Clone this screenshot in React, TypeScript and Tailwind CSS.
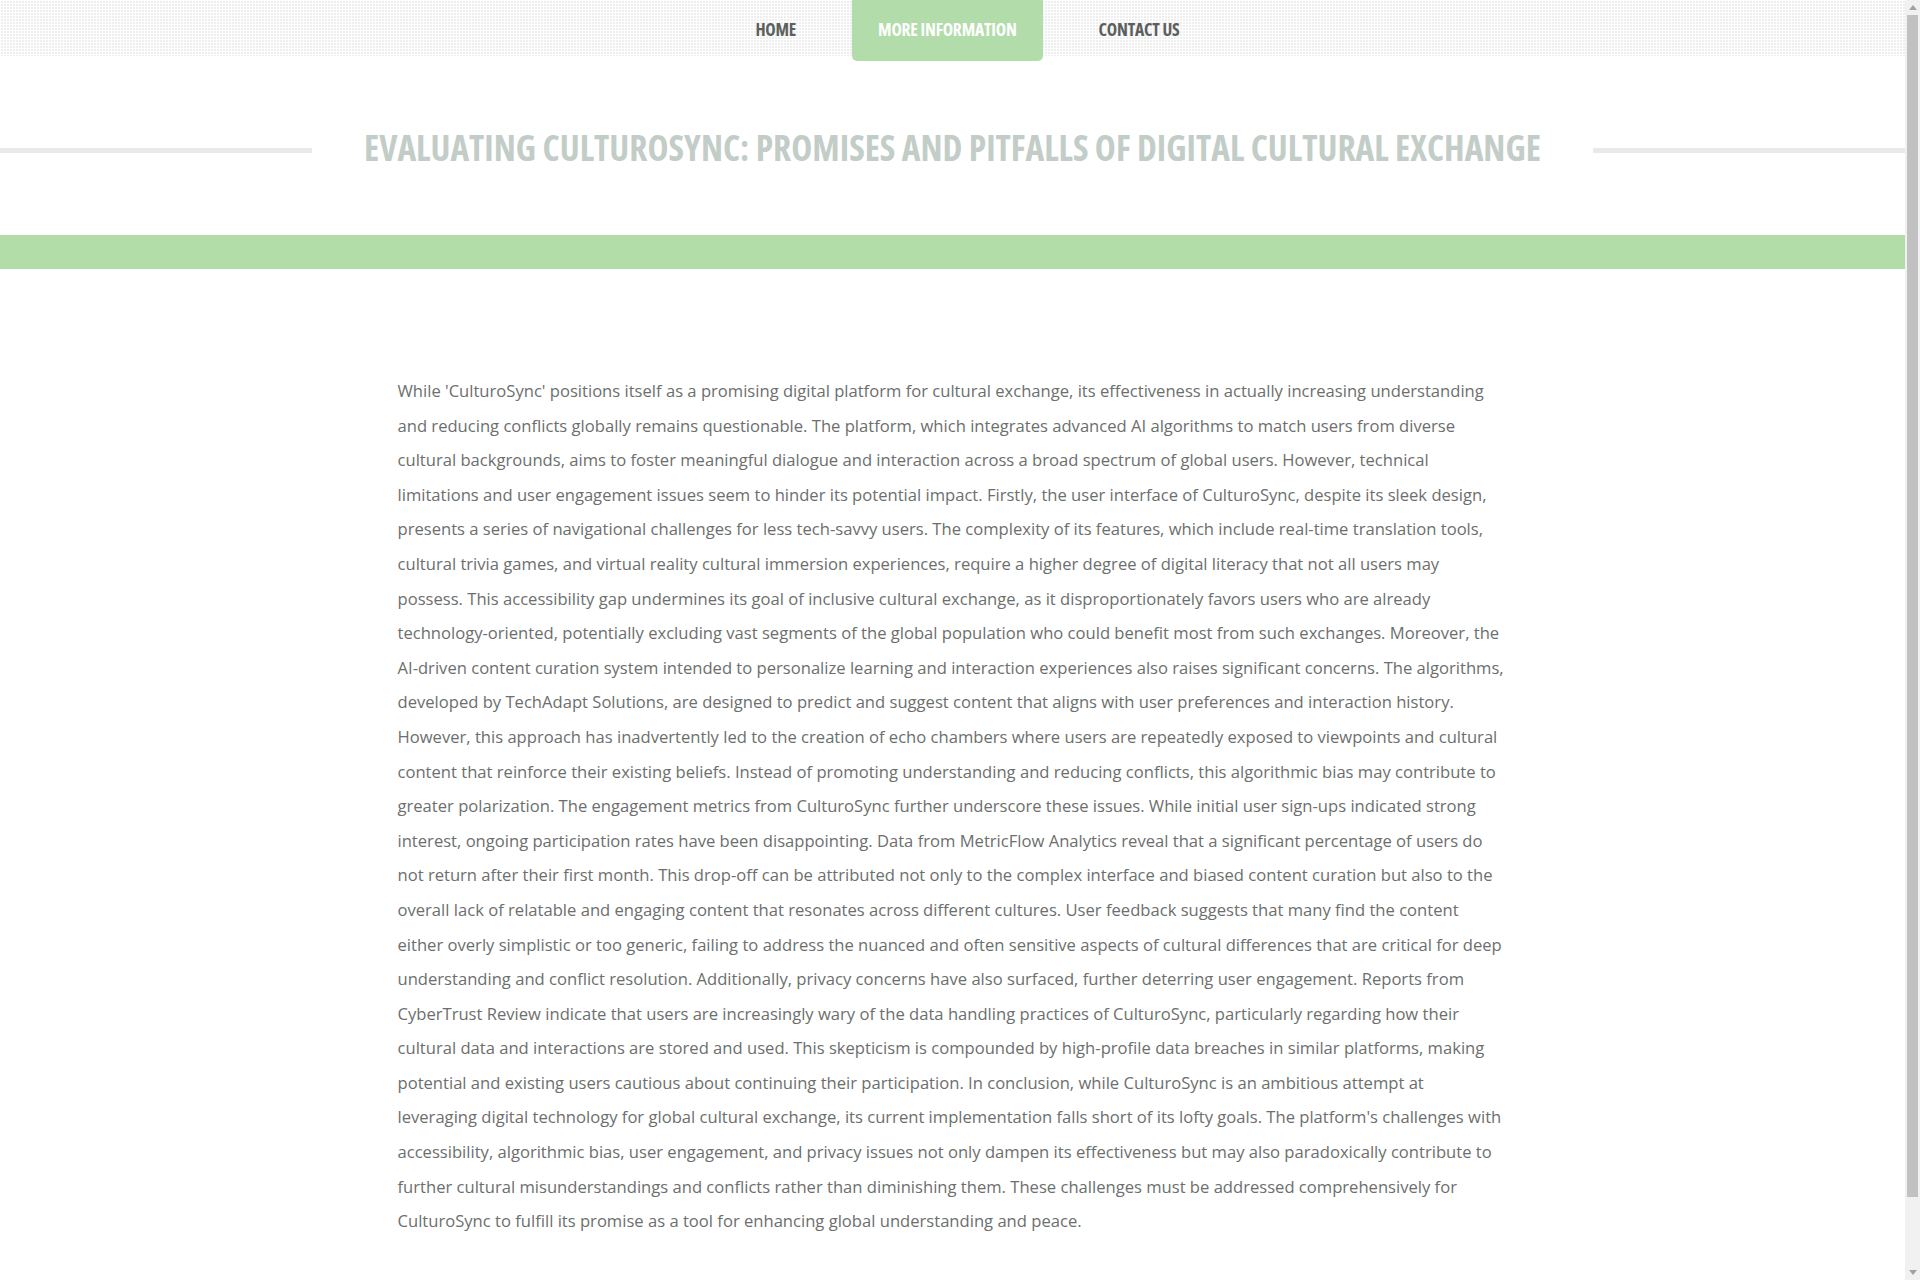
import React from 'react'

const navItems = [
  { label: 'HOME', active: false },
  { label: 'MORE INFORMATION', active: true },
  { label: 'CONTACT US', active: false },
]

const body =
  "While 'CulturoSync' positions itself as a promising digital platform for cultural exchange, its effectiveness in actually increasing understanding and reducing conflicts globally remains questionable. The platform, which integrates advanced AI algorithms to match users from diverse cultural backgrounds, aims to foster meaningful dialogue and interaction across a broad spectrum of global users. However, technical limitations and user engagement issues seem to hinder its potential impact. Firstly, the user interface of CulturoSync, despite its sleek design, presents a series of navigational challenges for less tech-savvy users. The complexity of its features, which include real-time translation tools, cultural trivia games, and virtual reality cultural immersion experiences, require a higher degree of digital literacy that not all users may possess. This accessibility gap undermines its goal of inclusive cultural exchange, as it disproportionately favors users who are already technology-oriented, potentially excluding vast segments of the global population who could benefit most from such exchanges. Moreover, the AI-driven content curation system intended to personalize learning and interaction experiences also raises significant concerns. The algorithms, developed by TechAdapt Solutions, are designed to predict and suggest content that aligns with user preferences and interaction history. However, this approach has inadvertently led to the creation of echo chambers where users are repeatedly exposed to viewpoints and cultural content that reinforce their existing beliefs. Instead of promoting understanding and reducing conflicts, this algorithmic bias may contribute to greater polarization. The engagement metrics from CulturoSync further underscore these issues. While initial user sign-ups indicated strong interest, ongoing participation rates have been disappointing. Data from MetricFlow Analytics reveal that a significant percentage of users do not return after their first month. This drop-off can be attributed not only to the complex interface and biased content curation but also to the overall lack of relatable and engaging content that resonates across different cultures. User feedback suggests that many find the content either overly simplistic or too generic, failing to address the nuanced and often sensitive aspects of cultural differences that are critical for deep understanding and conflict resolution. Additionally, privacy concerns have also surfaced, further deterring user engagement. Reports from CyberTrust Review indicate that users are increasingly wary of the data handling practices of CulturoSync, particularly regarding how their cultural data and interactions are stored and used. This skepticism is compounded by high-profile data breaches in similar platforms, making potential and existing users cautious about continuing their participation. In conclusion, while CulturoSync is an ambitious attempt at leveraging digital technology for global cultural exchange, its current implementation falls short of its lofty goals. The platform's challenges with accessibility, algorithmic bias, user engagement, and privacy issues not only dampen its effectiveness but may also paradoxically contribute to further cultural misunderstandings and conflicts rather than diminishing them. These challenges must be addressed comprehensively for CulturoSync to fulfill its promise as a tool for enhancing global understanding and peace."

function Scrollbar() {
  return (
    <div className="flex h-full w-[15px] flex-col items-center bg-[#f1f1f1]">
      <div className="flex h-[15px] w-full items-center justify-center">
        <svg width="8" height="5" viewBox="0 0 8 5">
          <path d="M4 0 L8 5 L0 5 Z" fill="#a3a3a3" />
        </svg>
      </div>
      <div className="mb-[68px] w-[11px] flex-1 bg-[#c1c1c1]" />
      <div className="flex h-[15px] w-full items-center justify-center">
        <svg width="8" height="5" viewBox="0 0 8 5">
          <path d="M0 0 L8 0 L4 5 Z" fill="#a3a3a3" />
        </svg>
      </div>
    </div>
  )
}

export default function App() {
  return (
    <div className="flex h-screen bg-white font-['Open_Sans',sans-serif]">
      <div className="flex-1 overflow-y-auto [scrollbar-width:none]">
        <div className="min-h-[1350px]">
          {/* top nav on dotted strip */}
          <header className="h-[56px] bg-[#eeeeee] bg-[linear-gradient(to_right,#ffffff_1px,transparent_1px),linear-gradient(to_bottom,#ffffff_1px,transparent_1px)] bg-[size:3px_3px]">
            <ul className="flex justify-center">
              {navItems.map((item) => (
                <li key={item.label} className="ml-[30px]">
                  <a
                    className={
                      item.active
                        ? 'flex h-[61px] items-center rounded-b-[5px] bg-[#b2dca9] px-[26px] pb-[2px] text-[17.5px] font-bold tracking-[-0.2px] text-white font-stretch-condensed'
                        : 'flex h-[56px] items-center px-[26px] pt-[3px] text-[17.5px] font-bold tracking-[-0.2px] text-[#5b605d] font-stretch-condensed'
                    }
                  >
                    {item.label}
                  </a>
                </li>
              ))}
            </ul>
          </header>

          {/* title with side rules */}
          <section className="flex h-[179px] items-center pt-[9px]">
            <div className="h-[5px] flex-1 bg-[#e8e9e8]" />
            <h1 className="px-[52px] pb-[4px] text-[35.5px] font-bold uppercase leading-none text-[#c3cdc7] font-stretch-condensed">
              Evaluating CulturoSync: Promises and Pitfalls of Digital Cultural Exchange
            </h1>
            <div className="h-[5px] flex-1 bg-[#e8e9e8]" />
          </section>

          <div className="h-[34px] bg-[#b2dda9]" />

          <main className="mx-auto w-[1110px] pt-[105px] pb-[110px]">
            <p className="text-[16.6px] leading-[34.6px] text-[#6c6f6d]">{body}</p>
          </main>
        </div>
      </div>
      <Scrollbar />
    </div>
  )
}
